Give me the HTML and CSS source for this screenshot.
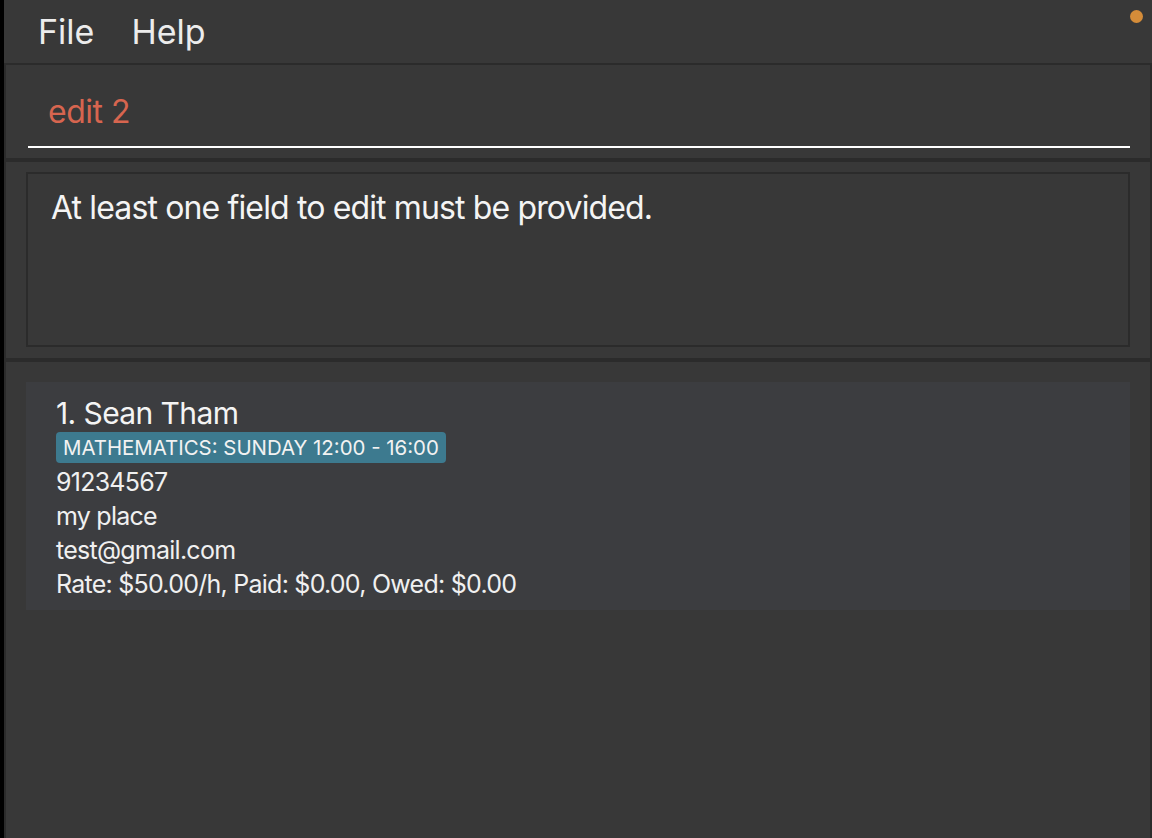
FILE: index.html
```html
<!DOCTYPE html>
<html>
<head>
<meta charset="utf-8">
<link rel="stylesheet" href="styles.css">
</head>
<body>
<div class="window">
  <div class="menubar">
    <span class="menu-item">File</span>
    <span class="menu-item">Help</span>
    <span class="status-dot"></span>
  </div>
  <div class="panes">
    <div class="command-pane">
      <div class="cmd-field">edit 2</div>
    </div>
    <div class="result-pane">
      <div class="result-box">At least one field to edit must be provided.</div>
    </div>
    <div class="list-pane">
      <div class="card">
        <div class="name">1. Sean Tham</div>
        <div class="tags"><span class="tag">MATHEMATICS: SUNDAY 12:00 - 16:00</span></div>
        <div class="detail">91234567</div>
        <div class="detail">my place</div>
        <div class="detail">test@gmail.com</div>
        <div class="detail">Rate: $50.00/h, Paid: $0.00, Owed: $0.00</div>
      </div>
    </div>
  </div>
</div>
</body>
</html>
```
FILE: styles.css
```css
html, body {
  margin: 0;
  padding: 0;
  background: #000;
}
body {
  width: 1152px;
  height: 838px;
  overflow: hidden;
  font-family: Inter, "Noto Sans", sans-serif;
  color: #f0f0f0;
}
.window {
  margin-left: 4px;
  height: 838px;
  display: flex;
  flex-direction: column;
  background: #383838;
}
.menubar {
  position: relative;
  height: 63px;
  border-bottom: 2px solid #2b2b2b;
  display: flex;
  align-items: center;
  padding-left: 34px;
  gap: 37px;
  font-size: 34px;
  letter-spacing: 0;
  line-height: 63px;
  color: #ececec;
}
.status-dot {
  position: absolute;
  right: 9px;
  top: 10px;
  width: 13px;
  height: 13px;
  border-radius: 50%;
  background: #d48c39;
}
.panes {
  flex: 1;
  display: flex;
  flex-direction: column;
  border-left: 2px solid #2b2b2b;
  border-right: 2px solid #2b2b2b;
}
.command-pane {
  box-sizing: border-box;
  padding: 27px 20px 10px 22px;
  border-bottom: 4px solid #2b2b2b;
  height: 97px;
}
.cmd-field {
  border-bottom: 2px solid #ffffff;
  padding: 0 0 14px 20px;
  font-size: 32px;
  line-height: 40px;
  letter-spacing: -0.015em;
  color: #d7654f;
}
.result-pane {
  height: 200px;
  box-sizing: border-box;
  padding: 10px 20px 11px 20px;
  border-bottom: 4px solid #2b2b2b;
}
.result-box {
  height: 175px;
  box-sizing: border-box;
  border: 2px solid #2b2b2b;
  padding: 14px 23px;
  font-size: 32px;
  line-height: 40px;
  letter-spacing: -0.027em;
  color: #f4f4f4;
}
.list-pane {
  flex: 1;
  padding: 20px 20px 0 20px;
}
.card {
  height: 228px;
  box-sizing: border-box;
  background: #3c3d40;
  padding: 13px 30px 0 30px;
}
.name {
  font-size: 30px;
  line-height: 36px;
  letter-spacing: -0.02em;
  color: #f4f4f4;
}
.tags {
  margin-top: 1px;
  margin-bottom: 2px;
  display: flex;
}
.tag {
  background: #3d7a8f;
  border-radius: 4px;
  height: 31px;
  box-sizing: border-box;
  padding: 1px 7px 0 7px;
  font-size: 20.4px;
  line-height: 30px;
  letter-spacing: 0;
  color: #f2f2f2;
}
.detail {
  font-size: 25px;
  line-height: 34px;
  letter-spacing: -0.03em;
  color: #f0f0f0;
}
```
